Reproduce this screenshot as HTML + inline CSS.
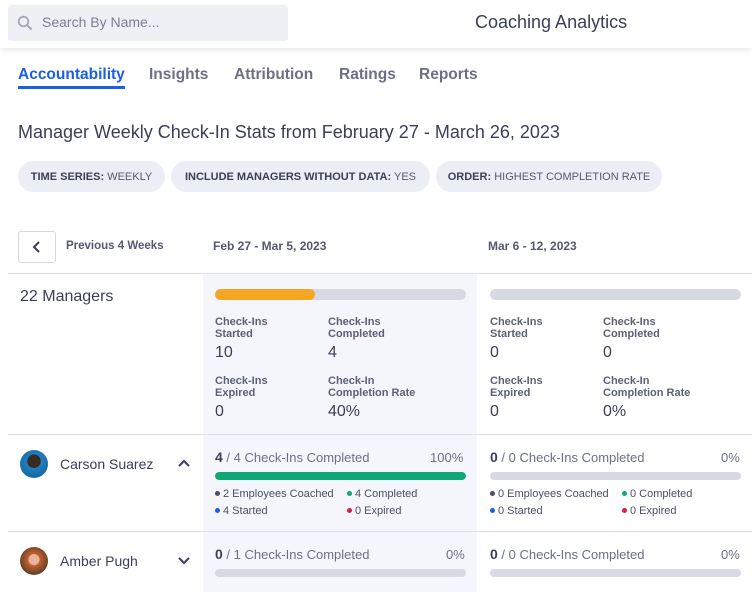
<!DOCTYPE html>
<html><head><meta charset="utf-8">
<style>
*{margin:0;padding:0;box-sizing:border-box}
body{width:752px;height:592px;overflow:hidden;background:#fff;font-family:"Liberation Sans",sans-serif;color:#3b3f55;position:relative}
.a{position:absolute;white-space:nowrap}
.hdr{position:absolute;left:0;top:0;width:752px;height:48px;background:#fff;box-shadow:0 2px 6px rgba(40,50,80,.12)}
.tab{font-size:15.5px;font-weight:bold;color:#6b7085;top:66px}
.chip{position:absolute;top:161px;height:31px;border-radius:16px;background:#eceef5;font-size:11px;line-height:33px;text-align:center;color:#3b3f55}
.chip b{font-weight:bold}
.chip span{color:#55596d}
.line{position:absolute;left:8px;width:744px;height:1px;background:#dcdee6}
.bar{position:absolute;height:11px;border-radius:6px;background:#d8dae3;overflow:hidden}
.bar i{position:absolute;left:0;top:0;bottom:0;border-radius:6px}
.lbl{font-size:11px;font-weight:bold;color:#5d6175;line-height:12px}
.val{font-size:16px;color:#3b3f55}
.ct{font-size:13px;color:#6b7085}
.ct b{color:#3b3f55;font-size:14px}
.lg{font-size:11px;color:#4b4f63}
.lg:before{content:"";display:inline-block;width:5px;height:5px;border-radius:50%;background:var(--c);margin-right:3px;vertical-align:1px}
</style></head><body>
<div class="hdr"></div>
<div class="a" style="left:8px;top:5px;width:280px;height:36px;background:#eef0f6;border-radius:3px"></div>
<svg class="a" style="left:17px;top:15px" width="16" height="16" viewBox="0 0 16 16"><circle cx="6.5" cy="6.5" r="4.8" fill="none" stroke="#a4a8b8" stroke-width="1.8"/><path d="M10 10l4 4" stroke="#a4a8b8" stroke-width="2" stroke-linecap="round"/></svg>
<div class="a" style="left:42px;top:14px;font-size:14px;color:#7a7e90">Search By Name...</div>
<div class="a" style="left:475px;top:12px;font-size:18px;color:#3b3f55">Coaching Analytics</div>

<div class="a tab" style="left:18px;color:#1a5fe8">Accountability</div>
<div class="a" style="left:18px;top:86px;width:107px;height:3px;background:#1a5fe8"></div>
<div class="a tab" style="left:149px">Insights</div>
<div class="a tab" style="left:234px">Attribution</div>
<div class="a tab" style="left:339px">Ratings</div>
<div class="a tab" style="left:419px">Reports</div>

<div class="a" style="left:18px;top:122px;font-size:18px;color:#3b3f55">Manager Weekly Check-In Stats from February 27 - March 26, 2023</div>
<div class="chip" style="left:18px;width:147px"><b>TIME SERIES:</b> <span>WEEKLY</span></div>
<div class="chip" style="left:171px;width:259px"><b>INCLUDE MANAGERS WITHOUT DATA:</b> <span>YES</span></div>
<div class="chip" style="left:436px;width:226px"><b>ORDER:</b> <span>HIGHEST COMPLETION RATE</span></div>

<div class="a" style="left:18px;top:231px;width:38px;height:32px;border:1px solid #d6d8e0;border-radius:3px"></div>
<svg class="a" style="left:30px;top:240px" width="14" height="14" viewBox="0 0 14 14"><path d="M9 2L4 7l5 5" fill="none" stroke="#3b3f55" stroke-width="2"/></svg>
<div class="a" style="left:66px;top:240px;font-size:11.5px;font-weight:bold;color:#55596d">Previous 4 Weeks</div>
<div class="a" style="left:213px;top:239px;font-size:12px;font-weight:bold;color:#55596d">Feb 27 - Mar 5, 2023</div>
<div class="a" style="left:488px;top:239px;font-size:12px;font-weight:bold;color:#55596d">Mar 6 - 12, 2023</div>

<div class="a" style="left:203px;top:274px;width:274px;height:318px;background:#f5f6fb"></div>
<div class="line" style="top:273px"></div>
<div class="line" style="top:434px"></div>
<div class="line" style="top:531px"></div>

<div class="a" style="left:20px;top:288px;font-size:16px">22 Managers</div>

<div class="bar" style="left:215px;top:289px;width:251px"><i style="width:100px;background:#f5a623"></i></div>
<div class="a lbl" style="left:215px;top:316px">Check-Ins<br>Started</div>
<div class="a lbl" style="left:328px;top:316px">Check-Ins<br>Completed</div>
<div class="a val" style="left:215px;top:344px">10</div>
<div class="a val" style="left:328px;top:344px">4</div>
<div class="a lbl" style="left:215px;top:375px">Check-Ins<br>Expired</div>
<div class="a lbl" style="left:328px;top:375px">Check-In<br>Completion Rate</div>
<div class="a val" style="left:215px;top:403px">0</div>
<div class="a val" style="left:328px;top:403px">40%</div>

<div class="bar" style="left:490px;top:289px;width:251px"></div>
<div class="a lbl" style="left:490px;top:316px">Check-Ins<br>Started</div>
<div class="a lbl" style="left:603px;top:316px">Check-Ins<br>Completed</div>
<div class="a val" style="left:490px;top:344px">0</div>
<div class="a val" style="left:603px;top:344px">0</div>
<div class="a lbl" style="left:490px;top:375px">Check-Ins<br>Expired</div>
<div class="a lbl" style="left:603px;top:375px">Check-In<br>Completion Rate</div>
<div class="a val" style="left:490px;top:403px">0</div>
<div class="a val" style="left:603px;top:403px">0%</div>

<div class="a" style="left:20px;top:450px;width:28px;height:28px;border-radius:50%;background:radial-gradient(circle at 50% 40%,#3a2a22 0 30%,#1f7fc0 32%,#125a92)"></div>
<div class="a" style="left:60px;top:456px;font-size:14px">Carson Suarez</div>
<svg class="a" style="left:177px;top:458px" width="14" height="10" viewBox="0 0 14 10"><path d="M2 8l5-5 5 5" fill="none" stroke="#3b3f55" stroke-width="2"/></svg>
<div class="a ct" style="left:215px;top:449px"><b>4</b> / 4 Check-Ins Completed</div>
<div class="a ct" style="left:430px;top:450px">100%</div>
<div class="bar" style="left:215px;top:472px;width:251px;height:8px"><i style="width:100%;background:#0fa874"></i></div>
<div class="a lg" style="left:215px;top:488px;--c:#4b4f63">2 Employees Coached</div>
<div class="a lg" style="left:347px;top:488px;--c:#0fa874">4 Completed</div>
<div class="a lg" style="left:215px;top:505px;--c:#1a5fe8">4 Started</div>
<div class="a lg" style="left:347px;top:505px;--c:#d81b4a">0 Expired</div>

<div class="a ct" style="left:490px;top:449px"><b>0</b> / 0 Check-Ins Completed</div>
<div class="a ct" style="left:721px;top:450px">0%</div>
<div class="bar" style="left:490px;top:472px;width:251px;height:8px"></div>
<div class="a lg" style="left:490px;top:488px;--c:#4b4f63">0 Employees Coached</div>
<div class="a lg" style="left:622px;top:488px;--c:#0fa874">0 Completed</div>
<div class="a lg" style="left:490px;top:505px;--c:#1a5fe8">0 Started</div>
<div class="a lg" style="left:622px;top:505px;--c:#d81b4a">0 Expired</div>

<div class="a" style="left:20px;top:547px;width:28px;height:28px;border-radius:50%;background:radial-gradient(circle at 50% 45%,#e9b59a 0 25%,#c8602e 28%,#7a4a2a 60%,#2a2220)"></div>
<div class="a" style="left:60px;top:553px;font-size:14px">Amber Pugh</div>
<svg class="a" style="left:177px;top:556px" width="14" height="10" viewBox="0 0 14 10"><path d="M2 2l5 5 5-5" fill="none" stroke="#3b3f55" stroke-width="2"/></svg>
<div class="a ct" style="left:215px;top:546px"><b>0</b> / 1 Check-Ins Completed</div>
<div class="a ct" style="left:446px;top:547px">0%</div>
<div class="bar" style="left:215px;top:569px;width:251px;height:8px"></div>
<div class="a ct" style="left:490px;top:546px"><b>0</b> / 0 Check-Ins Completed</div>
<div class="a ct" style="left:721px;top:547px">0%</div>
<div class="bar" style="left:490px;top:569px;width:251px;height:8px"></div>
</body></html>
